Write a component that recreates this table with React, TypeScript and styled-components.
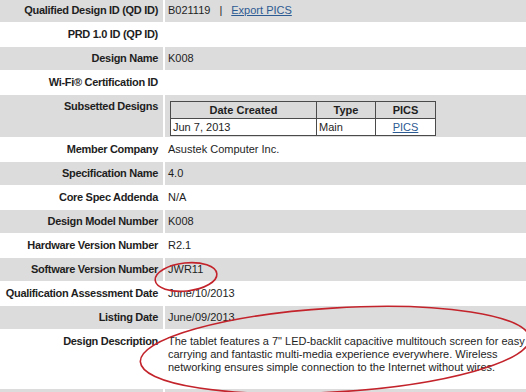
import styled, { createGlobalStyle } from 'styled-components';

const GlobalStyle = createGlobalStyle`
    body {
        margin: 0;
        background: #ffffff;
        font-family: 'Liberation Sans', Arial, sans-serif;
        color: #1e1e1e;
    }
`;

const Page = styled.div`
    position: relative;
    width: 526px;
    height: 392px;
    overflow: hidden;
    font-size: 11px;
`;

const Sheet = styled.div`
    display: flex;
    flex-direction: column;
    gap: 1px;
    margin-top: -1px;
`;

const Row = styled.div<{ $shade: boolean; $height?: number }>`
    display: grid;
    grid-template-columns: 163px 1fr;
    column-gap: 2px;
    height: ${(p) => p.$height ?? 23}px;
    & > div {
        background: ${(p) => (p.$shade ? '#dcdcdc' : '#ffffff')};
    }
`;

const Label = styled.div`
    padding: 4px 5px 0 0;
    text-align: right;
    font-weight: bold;
    letter-spacing: -0.3px;
    line-height: 15px;
    white-space: nowrap;
`;

const Value = styled.div`
    padding: 4px 0 0 3px;
    line-height: 15px;
    white-space: nowrap;
`;

const Description = styled(Value)`
    padding-top: 5px;
    line-height: 13px;
`;

const Link = styled.a`
    color: #2c5a92;
    text-decoration: underline;
`;

const Pipe = styled.span`
    margin: 0 9px;
`;

//subsetted designs table
const SubTable = styled.table`
    margin: 6px 0 0 5px;
    border-collapse: collapse;
    font-size: 11px;
    line-height: 14px;
    background: #ffffff;
`;

const HeadCell = styled.th<{ $w: number }>`
    width: ${(p) => p.$w}px;
    height: 16px;
    padding: 0;
    border: 1px solid #4a4a4a;
    background: #dadada;
    font-weight: bold;
    text-align: center;
`;

const BodyCell = styled.td<{ $center?: boolean }>`
    height: 16px;
    padding: 0 2px;
    border: 1px solid #4a4a4a;
    text-align: ${(p) => (p.$center ? 'center' : 'left')};
`;

const Marks = styled.svg`
    position: absolute;
    left: 0;
    top: 0;
    pointer-events: none;
`;

const rows: { label: string; value?: string }[] = [
    { label: 'Member Company', value: 'Asustek Computer Inc.' },
    { label: 'Specification Name', value: '4.0' },
    { label: 'Core Spec Addenda', value: 'N/A' },
    { label: 'Design Model Number', value: 'K008' },
    { label: 'Hardware Version Number', value: 'R2.1' },
    { label: 'Software Version Number', value: 'JWR11' },
    { label: 'Qualification Assessment Date', value: 'June/10/2013' },
    { label: 'Listing Date', value: 'June/09/2013' },
];

function App() {
    return (
        <Page>
            <GlobalStyle />
            <Sheet>
                <Row $shade>
                    <Label>Qualified Design ID (QD ID)</Label>
                    <Value>
                        B021119<Pipe>|</Pipe>
                        <Link href="#">Export PICS</Link>
                    </Value>
                </Row>
                <Row $shade={false}>
                    <Label>PRD 1.0 ID (QP ID)</Label>
                    <Value />
                </Row>
                <Row $shade>
                    <Label>Design Name</Label>
                    <Value>K008</Value>
                </Row>
                <Row $shade={false}>
                    <Label>Wi-Fi® Certification ID</Label>
                    <Value />
                </Row>
                <Row $shade $height={42}>
                    <Label>Subsetted Designs</Label>
                    <div>
                        <SubTable>
                            <thead>
                                <tr>
                                    <HeadCell $w={145}>Date Created</HeadCell>
                                    <HeadCell $w={58}>Type</HeadCell>
                                    <HeadCell $w={59}>PICS</HeadCell>
                                </tr>
                            </thead>
                            <tbody>
                                <tr>
                                    <BodyCell>Jun 7, 2013</BodyCell>
                                    <BodyCell>Main</BodyCell>
                                    <BodyCell $center>
                                        <Link href="#">PICS</Link>
                                    </BodyCell>
                                </tr>
                            </tbody>
                        </SubTable>
                    </div>
                </Row>
                {rows.map((r, i) => (
                    <Row key={r.label} $shade={i % 2 === 1}>
                        <Label>{r.label}</Label>
                        <Value>{r.value}</Value>
                    </Row>
                ))}
                <Row $shade={false} $height={58}>
                    <Label>Design Description</Label>
                    <Description>
                        The tablet features a 7" LED-backlit capacitive multitouch screen for easy
                        <br />
                        carrying and fantastic multi-media experience everywhere. Wireless
                        <br />
                        networking ensures simple connection to the Internet without wires.
                    </Description>
                </Row>
                <Row $shade>
                    <Label />
                    <Value />
                </Row>
            </Sheet>
            <Marks width="526" height="392" viewBox="0 0 526 392">
                <ellipse
                    cx="186"
                    cy="277"
                    rx="31"
                    ry="14"
                    transform="rotate(-6 186 277)"
                    fill="none"
                    stroke="#c3232b"
                    strokeWidth="1.6"
                />
                <ellipse
                    cx="335"
                    cy="350"
                    rx="195"
                    ry="42"
                    transform="rotate(-3.5 335 350)"
                    fill="none"
                    stroke="#c3232b"
                    strokeWidth="1.6"
                />
            </Marks>
        </Page>
    );
}

export default App;
